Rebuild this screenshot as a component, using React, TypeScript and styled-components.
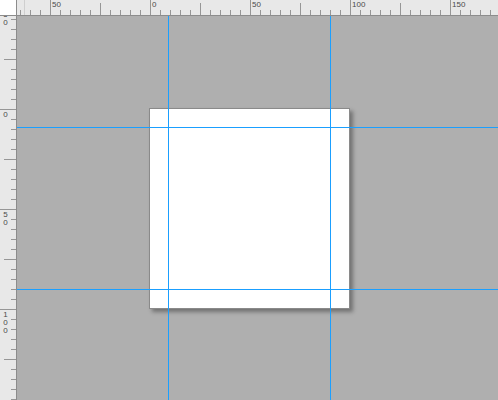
import React from "react";
import styled, { createGlobalStyle } from "styled-components";

const GlobalStyle = createGlobalStyle`
  html, body { margin: 0; padding: 0; width: 498px; height: 400px; overflow: hidden; background: #afafaf; }
  #root { width: 498px; height: 400px; }
`;

const Frame = styled.div`
  display: grid;
  grid-template-columns: 17px 1fr;
  grid-template-rows: 16px 1fr;
  width: 498px;
  height: 400px;
  font-family: "Liberation Sans", Arial, sans-serif;
`;

const Corner = styled.div`
  background: #ffffff;
  border-right: 1px solid #8c8c8c;
  border-bottom: 1px solid #8c8c8c;
`;

const TopRuler = styled.div`
  background: #e8e8e8;
  border-bottom: 1px solid #8c8c8c;
  overflow: hidden;
  svg { display: block; }
`;

const LeftRuler = styled.div`
  background: #e8e8e8;
  border-right: 1px solid #8c8c8c;
  overflow: hidden;
  svg { display: block; }
`;

const VerticalLabel = styled.text`
  writing-mode: vertical-rl;
  text-orientation: upright;
  letter-spacing: -1px;
  font-size: 8px;
  font-family: "Liberation Sans", Arial, sans-serif;
  fill: #4a4a4a;
`;

const Canvas = styled.div`
  position: relative;
  background: #afafaf;
  overflow: hidden;
`;

const Page = styled.div`
  position: absolute;
  left: 132px;
  top: 92px;
  width: 199px;
  height: 199px;
  background: #ffffff;
  border: 1px solid #8a8a8a;
  box-shadow: 3px 3px 4px rgba(0, 0, 0, 0.35);
`;

const Guide = styled.div<{ $axis: "v" | "h"; $at: number }>`
  position: absolute;
  background: #1a9fff;
  ${(p) =>
    p.$axis === "v"
      ? `left: ${p.$at}px; top: 0; bottom: 0; width: 1px;`
      : `top: ${p.$at}px; left: 0; right: 0; height: 1px;`}
`;

const TICK = "#969696";
const LABEL = "#4a4a4a";

function TopScale() {
  const ticks: React.ReactNode[] = [];
  for (let x = 0; x <= 500; x += 10) {
    const m = x % 100;
    const y1 = m === 50 ? 0 : m === 0 ? 3 : 10;
    ticks.push(
      <line key={"t" + x} x1={x + 0.5} x2={x + 0.5} y1={y1} y2={15} stroke={TICK} strokeWidth={1} />
    );
    if (m === 50) {
      ticks.push(
        <text key={"l" + x} x={x + 2} y={7} fontSize={8} fill={LABEL} fontFamily="Liberation Sans, Arial, sans-serif">
          {Math.abs((x - 150) / 2)}
        </text>
      );
    }
  }
  return (
    <svg width={481} height={15} viewBox="17 0 481 15">
      <line x1={24.5} x2={24.5} y1={0} y2={15} stroke="#cfcfcf" strokeWidth={1} />
      {ticks}
    </svg>
  );
}

function LeftScale() {
  const ticks: React.ReactNode[] = [];
  for (let y = 9; y <= 400; y += 10) {
    const m = (y - 9) % 100;
    const x1 = m === 0 ? 0 : m === 50 ? 4 : 11;
    ticks.push(
      <line key={"t" + y} x1={x1} x2={16} y1={y + 0.5} y2={y + 0.5} stroke={TICK} strokeWidth={1} />
    );
    if (m === 0) {
      ticks.push(
        <VerticalLabel key={"l" + y} x={5.5} y={y + 1}>
          {String(Math.abs((y - 109) / 2))}
        </VerticalLabel>
      );
    }
  }
  return (
    <svg width={16} height={384} viewBox="0 16 16 384">
      {ticks}
    </svg>
  );
}

export default function App() {
  return (
    <>
      <GlobalStyle />
      <Frame>
        <Corner />
        <TopRuler>
          <TopScale />
        </TopRuler>
        <LeftRuler>
          <LeftScale />
        </LeftRuler>
        <Canvas>
          <Page />
          <Guide $axis="h" $at={111} />
          <Guide $axis="h" $at={273} />
          <Guide $axis="v" $at={151} />
          <Guide $axis="v" $at={313} />
        </Canvas>
      </Frame>
    </>
  );
}
